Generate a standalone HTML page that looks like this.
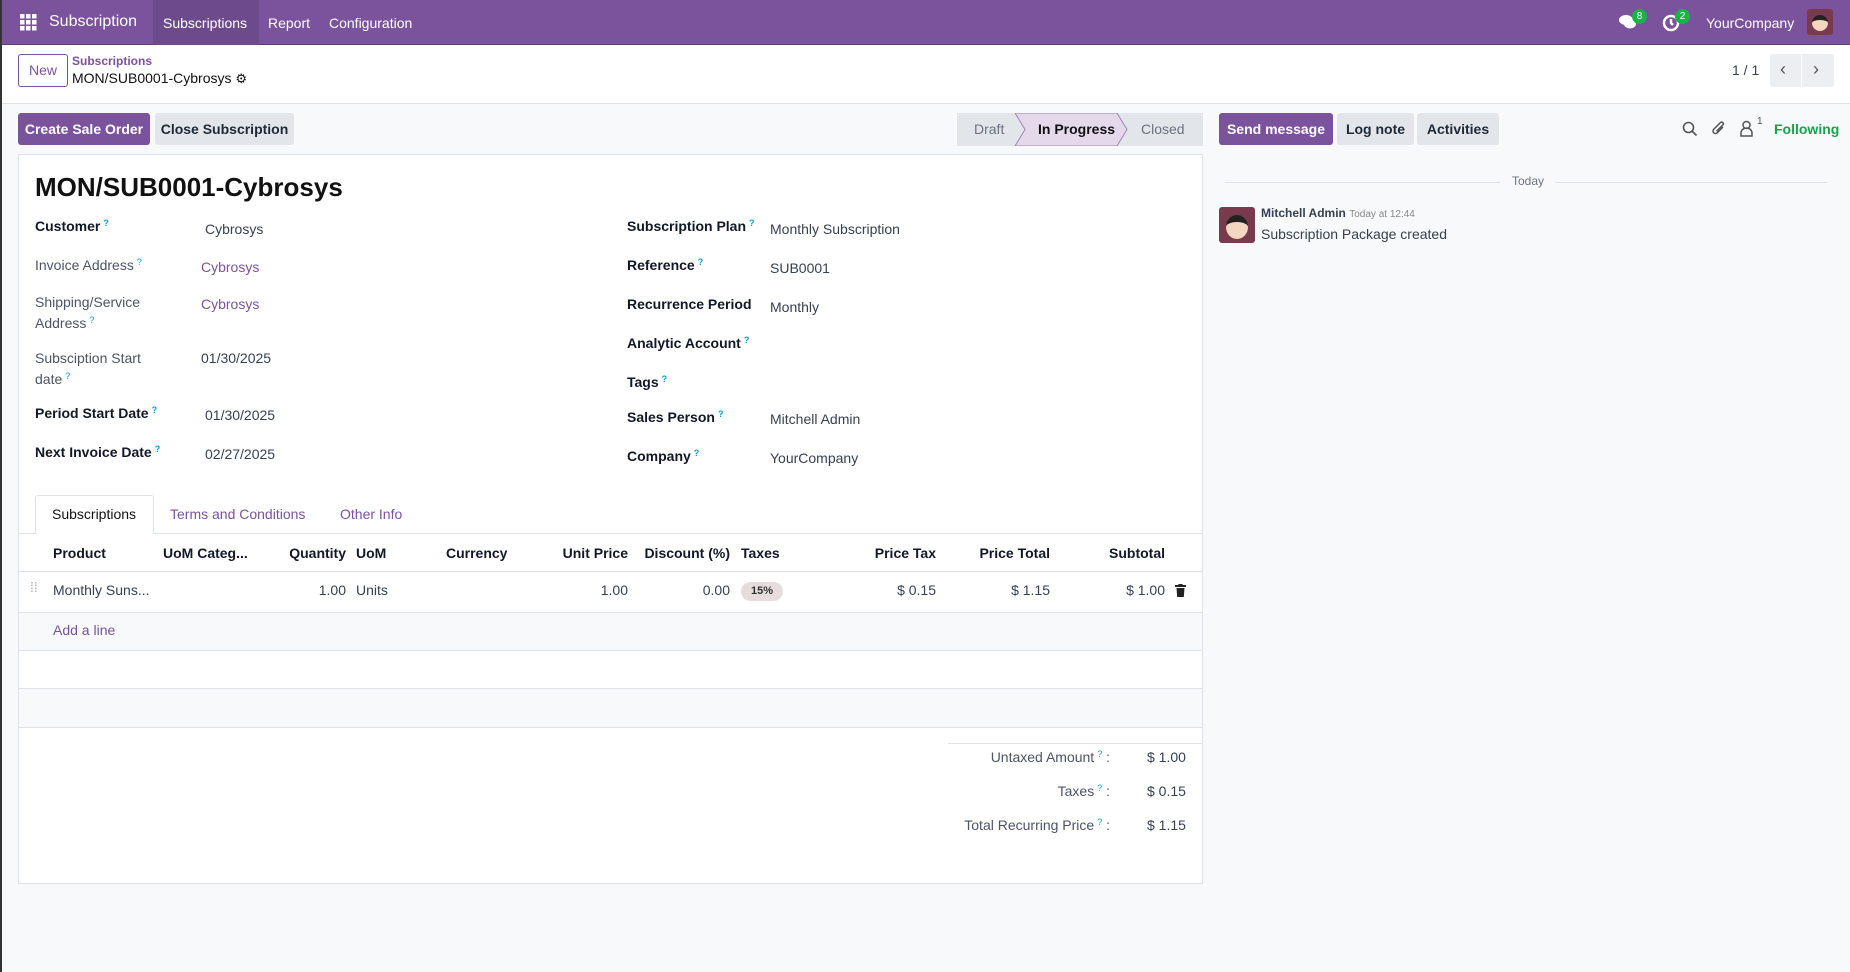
<!DOCTYPE html>
<html><head><meta charset="utf-8"><style>
*{margin:0;padding:0;box-sizing:border-box}
body{width:1850px;height:972px;overflow:hidden;background:#f8f9fa;font-family:"Liberation Sans",sans-serif;font-size:14px;color:#374151;position:relative}
.a{position:absolute;white-space:nowrap}
.nav{left:0;top:0;width:1850px;height:45px;background:#7b529c;border-bottom:1px solid #5f3f7a}
.nt{color:#fff;font-size:14px;top:15px}
.btn{position:absolute;height:32px;border-radius:3px;font-weight:bold;font-size:14px;line-height:32px;text-align:center}
.pri{background:#7b529c;color:#fff}
.sec{background:#e2e5e9;color:#1f2937}
.lb{font-weight:bold;color:#111827}
.lg{color:#4b5563}
.q{color:#0a9cd8;font-size:9px;vertical-align:top;margin-left:3px}
.lk{color:#7b529c}
.hd{font-weight:bold;color:#111827;top:545px}
.r{text-align:right}
.hl{position:absolute;left:19px;width:1183px;height:1px;background:#dee2e6}
</style></head><body>
<div class="a" style="left:0;top:0;width:2px;height:972px;background:#333;z-index:5"></div>
<div class="a nav"></div>
<svg class="a" style="left:20px;top:14px" width="17" height="17" viewBox="0 0 17 17" fill="#fff"><rect x="0" y="0" width="4.5" height="4.5"/><rect x="6" y="0" width="4.5" height="4.5"/><rect x="12" y="0" width="4.5" height="4.5"/><rect x="0" y="6" width="4.5" height="4.5"/><rect x="6" y="6" width="4.5" height="4.5"/><rect x="12" y="6" width="4.5" height="4.5"/><rect x="0" y="12" width="4.5" height="4.5"/><rect x="6" y="12" width="4.5" height="4.5"/><rect x="12" y="12" width="4.5" height="4.5"/></svg>
<div class="a nt" style="left:49px;top:13px;font-size:16px">Subscription</div>
<div class="a" style="left:153px;top:0;width:106px;height:45px;background:#6d4a8b"></div>
<div class="a nt" style="left:163px">Subscriptions</div>
<div class="a nt" style="left:268px">Report</div>
<div class="a nt" style="left:329px">Configuration</div>
<svg class="a" style="left:1619px;top:14px" width="18" height="16" viewBox="0 0 18 16" fill="#fff"><ellipse cx="7" cy="6" rx="7" ry="5"/><ellipse cx="11" cy="10" rx="6" ry="4.5"/></svg>
<div class="a" style="left:1632px;top:9px;width:15px;height:15px;border-radius:8px;background:#1bb24a;color:#fff;font-size:10px;text-align:center;line-height:15px">8</div>
<svg class="a" style="left:1662px;top:14px" width="18" height="18" viewBox="0 0 18 18" fill="none" stroke="#fff" stroke-width="2.5"><circle cx="9" cy="9" r="7"/><path d="M9 5v4l2 2"/></svg>
<div class="a" style="left:1675px;top:9px;width:15px;height:15px;border-radius:8px;background:#1bb24a;color:#fff;font-size:10px;text-align:center;line-height:15px">2</div>
<div class="a nt" style="left:1706px">YourCompany</div>
<div class="a" style="left:1807px;top:9px;width:26px;height:26px;border-radius:3px;background:#7a3a4e"><div style="margin:6px 5px;width:16px;height:16px;border-radius:50%;background:#f3d7c0;border-top:5px solid #222"></div></div>

<div class="a" style="left:0;top:46px;width:1850px;height:58px;background:#fff;border-bottom:1px solid #dee2e6"></div>
<div class="a" style="left:18px;top:54px;width:50px;height:33px;border:1px solid #7b529c;border-radius:3px;color:#7b529c;text-align:center;line-height:31px;font-size:14px">New</div>
<div class="a lk" style="left:72px;top:54px;font-size:12px;font-weight:bold">Subscriptions</div>
<div class="a" style="left:72px;top:70px;font-size:14px;color:#111">MON/SUB0001-Cybrosys <span style="font-size:13px">⚙</span></div>
<div class="a" style="left:1732px;top:62px;color:#374151">1 / 1</div>
<div class="a" style="left:1770px;top:54px;width:64px;height:33px;background:#eceef1;border-radius:3px"></div>
<div class="a" style="left:1801px;top:54px;width:1px;height:33px;background:#fff"></div>
<div class="a" style="left:1780px;top:59px;color:#555;font-size:18px">‹</div>
<div class="a" style="left:1813px;top:59px;color:#555;font-size:18px">›</div>

<div class="btn pri" style="left:18px;top:113px;width:132px">Create Sale Order</div>
<div class="btn sec" style="left:155px;top:113px;width:139px">Close Subscription</div>
<svg class="a" style="left:957px;top:113px" width="246" height="33" viewBox="0 0 246 33"><rect width="246" height="33" fill="#e2e5e9"/><path d="M58 0H160L170 16.5L160 33H58L68 16.5Z" fill="#e4d9ea" stroke="#a085b5"/></svg>
<div class="a" style="left:974px;top:121px;color:#6b7280">Draft</div>
<div class="a" style="left:1038px;top:121px;color:#111;font-weight:bold">In Progress</div>
<div class="a" style="left:1141px;top:121px;color:#6b7280">Closed</div>
<div class="btn pri" style="left:1219px;top:113px;width:114px">Send message</div>
<div class="btn sec" style="left:1337px;top:113px;width:77px">Log note</div>
<div class="btn sec" style="left:1417px;top:113px;width:82px">Activities</div>
<svg class="a" style="left:1682px;top:121px" width="16" height="16" viewBox="0 0 16 16" fill="none" stroke="#555" stroke-width="1.6"><circle cx="6.5" cy="6.5" r="5"/><path d="M10 10l4.5 4.5"/></svg>
<svg class="a" style="left:1711px;top:119px" width="16" height="19" viewBox="0 0 16 19" fill="none" stroke="#555" stroke-width="1.5"><path d="M12 8l-6 6a2.5 2.5 0 01-3.5-3.5L9.5 3.5a1.7 1.7 0 012.4 2.4L5.5 12.3"/></svg>
<svg class="a" style="left:1740px;top:120px" width="13" height="17" viewBox="0 0 13 17" fill="none" stroke="#555" stroke-width="1.5"><circle cx="6.5" cy="5" r="3.5"/><path d="M1 16v-3a5.5 5 0 0111 0v3z"/></svg>
<div class="a" style="left:1757px;top:116px;font-size:10px;color:#555">1</div>
<div class="a" style="left:1774px;top:121px;color:#16a34a;font-weight:bold;font-size:14px">Following</div>

<div class="a" style="left:1225px;top:182px;width:275px;height:1px;background:#dee2e6"></div>
<div class="a" style="left:1512px;top:174px;font-size:12px;color:#6b7280">Today</div>
<div class="a" style="left:1555px;top:182px;width:272px;height:1px;background:#dee2e6"></div>
<div class="a" style="left:1219px;top:207px;width:36px;height:36px;border-radius:3px;background:#7a3a4e;overflow:hidden"><div style="margin:8px 7px;width:22px;height:24px;border-radius:50%;background:#f3d7c0;border-top:7px solid #222"></div></div>
<div class="a" style="left:1261px;top:206px;font-size:12px;font-weight:bold;color:#374151">Mitchell Admin <span style="font-weight:normal;font-size:10px;color:#888">Today at 12:44</span></div>
<div class="a" style="left:1261px;top:226px;font-size:14px;color:#374151">Subscription Package created</div>

<div class="a" style="left:18px;top:154px;width:1185px;height:730px;background:#fff;border:1px solid #dee2e6"></div>
<div class="a" style="left:35px;top:172px;font-size:26px;font-weight:bold;color:#111">MON/SUB0001-Cybrosys</div>

<div class="a lb" style="left:35px;top:218px">Customer<span class="q">?</span></div>
<div class="a" style="left:205px;top:221px">Cybrosys</div>
<div class="a lg" style="left:35px;top:257px">Invoice Address<span class="q">?</span></div>
<div class="a lk" style="left:201px;top:259px">Cybrosys</div>
<div class="a lg" style="left:35px;top:294px">Shipping/Service</div>
<div class="a lg" style="left:35px;top:315px">Address<span class="q">?</span></div>
<div class="a lk" style="left:201px;top:296px">Cybrosys</div>
<div class="a lg" style="left:35px;top:350px">Subsciption Start</div>
<div class="a lg" style="left:35px;top:371px">date<span class="q">?</span></div>
<div class="a" style="left:201px;top:350px">01/30/2025</div>
<div class="a lb" style="left:35px;top:405px">Period Start Date<span class="q">?</span></div>
<div class="a" style="left:205px;top:407px">01/30/2025</div>
<div class="a lb" style="left:35px;top:444px">Next Invoice Date<span class="q">?</span></div>
<div class="a" style="left:205px;top:446px">02/27/2025</div>

<div class="a lb" style="left:627px;top:218px">Subscription Plan<span class="q">?</span></div>
<div class="a" style="left:770px;top:221px">Monthly Subscription</div>
<div class="a lb" style="left:627px;top:257px">Reference<span class="q">?</span></div>
<div class="a" style="left:770px;top:260px">SUB0001</div>
<div class="a lb" style="left:627px;top:296px">Recurrence Period</div>
<div class="a" style="left:770px;top:299px">Monthly</div>
<div class="a lb" style="left:627px;top:335px">Analytic Account<span class="q">?</span></div>
<div class="a lb" style="left:627px;top:374px">Tags<span class="q">?</span></div>
<div class="a lb" style="left:627px;top:409px">Sales Person<span class="q">?</span></div>
<div class="a" style="left:770px;top:411px">Mitchell Admin</div>
<div class="a lb" style="left:627px;top:448px">Company<span class="q">?</span></div>
<div class="a" style="left:770px;top:450px">YourCompany</div>

<div class="hl" style="top:533px"></div>
<div class="a" style="left:35px;top:495px;width:119px;height:39px;background:#fff;border:1px solid #dee2e6;border-bottom:none;border-radius:3px 3px 0 0"></div>
<div class="a" style="left:52px;top:506px;color:#111">Subscriptions</div>
<div class="a lk" style="left:170px;top:506px">Terms and Conditions</div>
<div class="a lk" style="left:340px;top:506px">Other Info</div>

<div class="a hd" style="left:53px">Product</div>
<div class="a hd" style="left:163px">UoM Categ...</div>
<div class="a hd r" style="left:246px;width:100px">Quantity</div>
<div class="a hd" style="left:356px">UoM</div>
<div class="a hd" style="left:446px">Currency</div>
<div class="a hd r" style="left:528px;width:100px">Unit Price</div>
<div class="a hd r" style="left:630px;width:100px">Discount (%)</div>
<div class="a hd" style="left:741px">Taxes</div>
<div class="a hd r" style="left:836px;width:100px">Price Tax</div>
<div class="a hd r" style="left:950px;width:100px">Price Total</div>
<div class="a hd r" style="left:1065px;width:100px">Subtotal</div>
<div class="hl" style="top:571px"></div>
<div class="a" style="left:30px;top:584px;color:#aaa;font-size:14px;line-height:6px">⁞⁞</div>
<div class="a" style="left:53px;top:582px">Monthly Suns...</div>
<div class="a r" style="left:246px;top:582px;width:100px">1.00</div>
<div class="a" style="left:356px;top:582px">Units</div>
<div class="a r" style="left:528px;top:582px;width:100px">1.00</div>
<div class="a r" style="left:630px;top:582px;width:100px">0.00</div>
<div class="a" style="left:741px;top:582px;width:42px;height:19px;border-radius:10px;background:#e6dcdc;font-size:11px;font-weight:bold;text-align:center;line-height:19px;color:#333">15%</div>
<div class="a r" style="left:836px;top:582px;width:100px">$ 0.15</div>
<div class="a r" style="left:950px;top:582px;width:100px">$ 1.15</div>
<div class="a r" style="left:1065px;top:582px;width:100px">$ 1.00</div>
<svg class="a" style="left:1175px;top:584px" width="11" height="13" viewBox="0 0 11 13" fill="#222"><rect x="0" y="1" width="11" height="2"/><rect x="3.5" y="0" width="4" height="2"/><path d="M1.5 4h8l-.7 9h-6.6z"/></svg>
<div class="hl" style="top:612px"></div>
<div class="a" style="left:19px;top:613px;width:1183px;height:37px;background:#f8f9fa"></div>
<div class="a lk" style="left:53px;top:622px">Add a line</div>
<div class="hl" style="top:650px"></div>
<div class="hl" style="top:688px"></div>
<div class="a" style="left:19px;top:689px;width:1183px;height:38px;background:#f8f9fa"></div>
<div class="hl" style="top:727px"></div>

<div class="a" style="left:948px;top:743px;width:254px;height:1px;background:#dee2e6"></div>
<div class="a lg r" style="left:900px;top:749px;width:210px">Untaxed Amount<span class="q">?</span> :</div>
<div class="a" style="left:1147px;top:749px">$ 1.00</div>
<div class="a lg r" style="left:900px;top:783px;width:210px">Taxes<span class="q">?</span> :</div>
<div class="a" style="left:1147px;top:783px">$ 0.15</div>
<div class="a lg r" style="left:900px;top:817px;width:210px">Total Recurring Price<span class="q">?</span> :</div>
<div class="a" style="left:1147px;top:817px">$ 1.15</div>
</body></html>
